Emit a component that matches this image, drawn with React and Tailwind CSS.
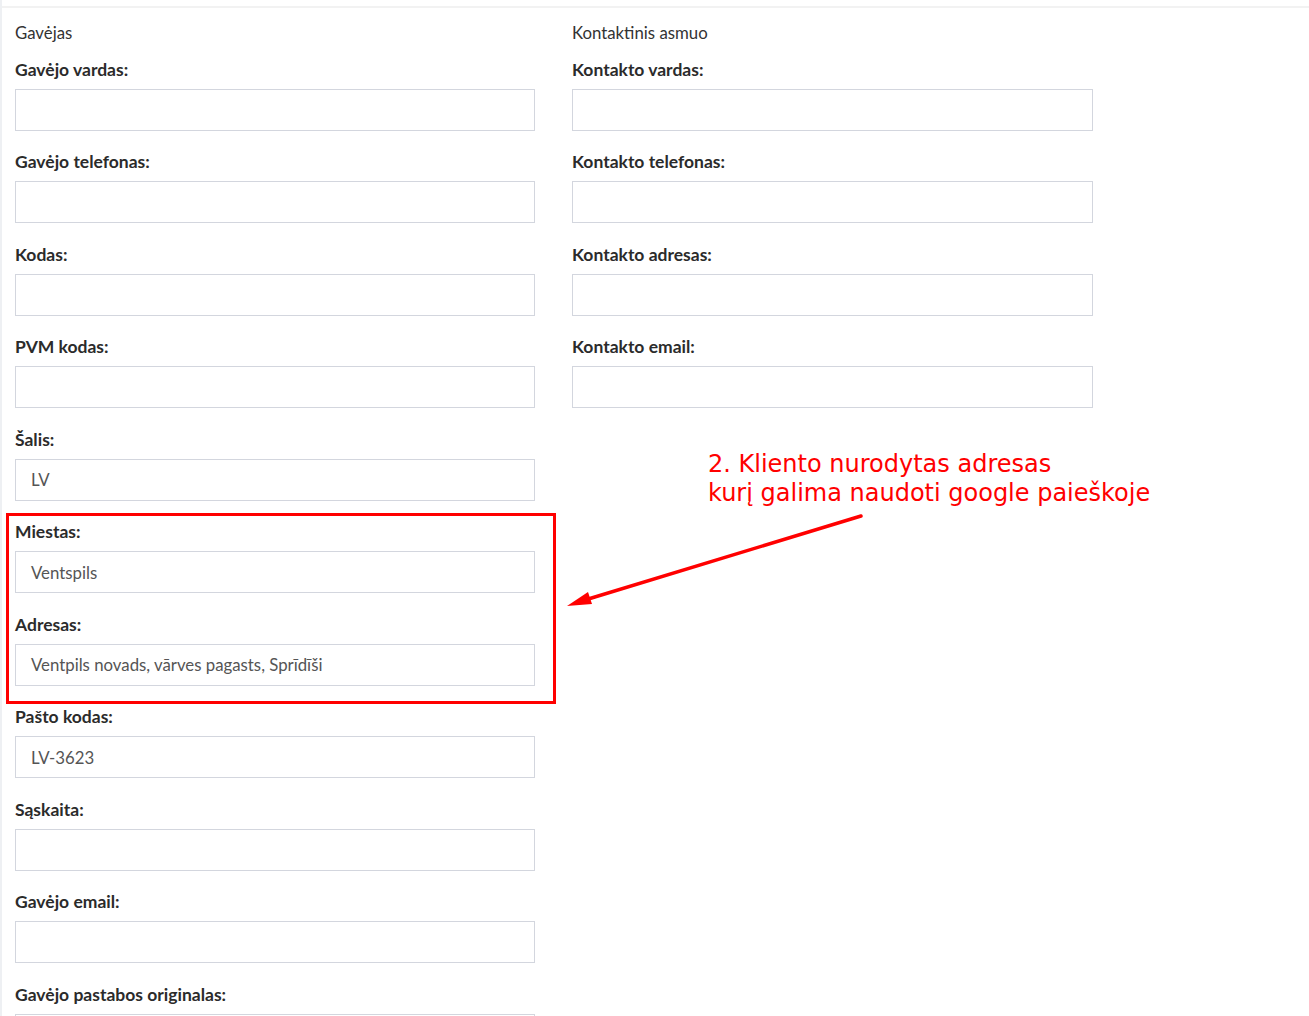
import React from "react";

const left = [
  ["Gavėjo vardas:", ""],
  ["Gavėjo telefonas:", ""],
  ["Kodas:", ""],
  ["PVM kodas:", ""],
  ["Šalis:", "LV"],
  ["Miestas:", "Ventspils"],
  ["Adresas:", "Ventpils novads, vārves pagasts, Sprīdīši"],
  ["Pašto kodas:", "LV-3623"],
  ["Sąskaita:", ""],
  ["Gavėjo email:", ""],
  ["Gavėjo pastabos originalas:", ""],
];

const right = [
  ["Kontakto vardas:", ""],
  ["Kontakto telefonas:", ""],
  ["Kontakto adresas:", ""],
  ["Kontakto email:", ""],
];

function Field({ label, value }) {
  return (
    <div className="mb-[18.5px]">
      <div className="h-[25px] pt-px leading-6 text-[17.5px] font-bold text-[#2b2b2b] mb-[7px] whitespace-nowrap">{label}</div>
      <div className="h-[42px] border border-[#d3d6de] bg-white px-[15px] flex items-center text-[16.8px] text-[#555]">
        {value}
      </div>
    </div>
  );
}

export default function App() {
  return (
    <div
      className="relative w-[1309px] h-[1016px] overflow-hidden bg-white"
      style={{ fontFamily: "Lato, 'Open Sans', sans-serif" }}
    >
      <div className="flex h-full">
        <div className="w-[2px] bg-[#eef0f3] shrink-0" />
        <div className="flex-1 flex flex-col">
          <div className="h-[6px] shrink-0" />
          <div className="h-[2px] bg-[#f2f2f2] shrink-0" />
          <div className="grid grid-cols-[550px_556px] pt-[11.99px]">
            <div className="pl-[13px] pr-[17px]">
              <div className="h-[25px] pt-px leading-6 text-[16.8px] text-[#333] mb-[12px]">Gavėjas</div>
              {left.map(([l, v]) => (
                <Field key={l} label={l} value={v} />
              ))}
            </div>
            <div className="pl-[20px] pr-[15px]">
              <div className="h-[25px] pt-px leading-6 text-[16.8px] text-[#333] mb-[12px]">Kontaktinis asmuo</div>
              {right.map(([l, v]) => (
                <Field key={l} label={l} value={v} />
              ))}
            </div>
          </div>
        </div>
      </div>

      <div className="absolute left-[6px] top-[513px] w-[550px] h-[191px] border-[3px] border-[#ff0000] pointer-events-none" />

      <div
        className="absolute left-[708px] top-[450px] text-[#ff0000] text-[24px] leading-[29px] whitespace-nowrap"
        style={{ fontFamily: "'DejaVu Sans', sans-serif" }}
      >
        <div>2. Kliento nurodytas adresas</div>
        <div>kurį galima naudoti google paieškoje</div>
      </div>

      <svg className="absolute left-0 top-0 pointer-events-none" width="1309" height="1016">
        <line x1="861" y1="516" x2="585" y2="600" stroke="#ff0000" strokeWidth="3.5" strokeLinecap="round" />
        <polygon points="567,606 588,592 592,604" fill="#ff0000" />
      </svg>
    </div>
  );
}
